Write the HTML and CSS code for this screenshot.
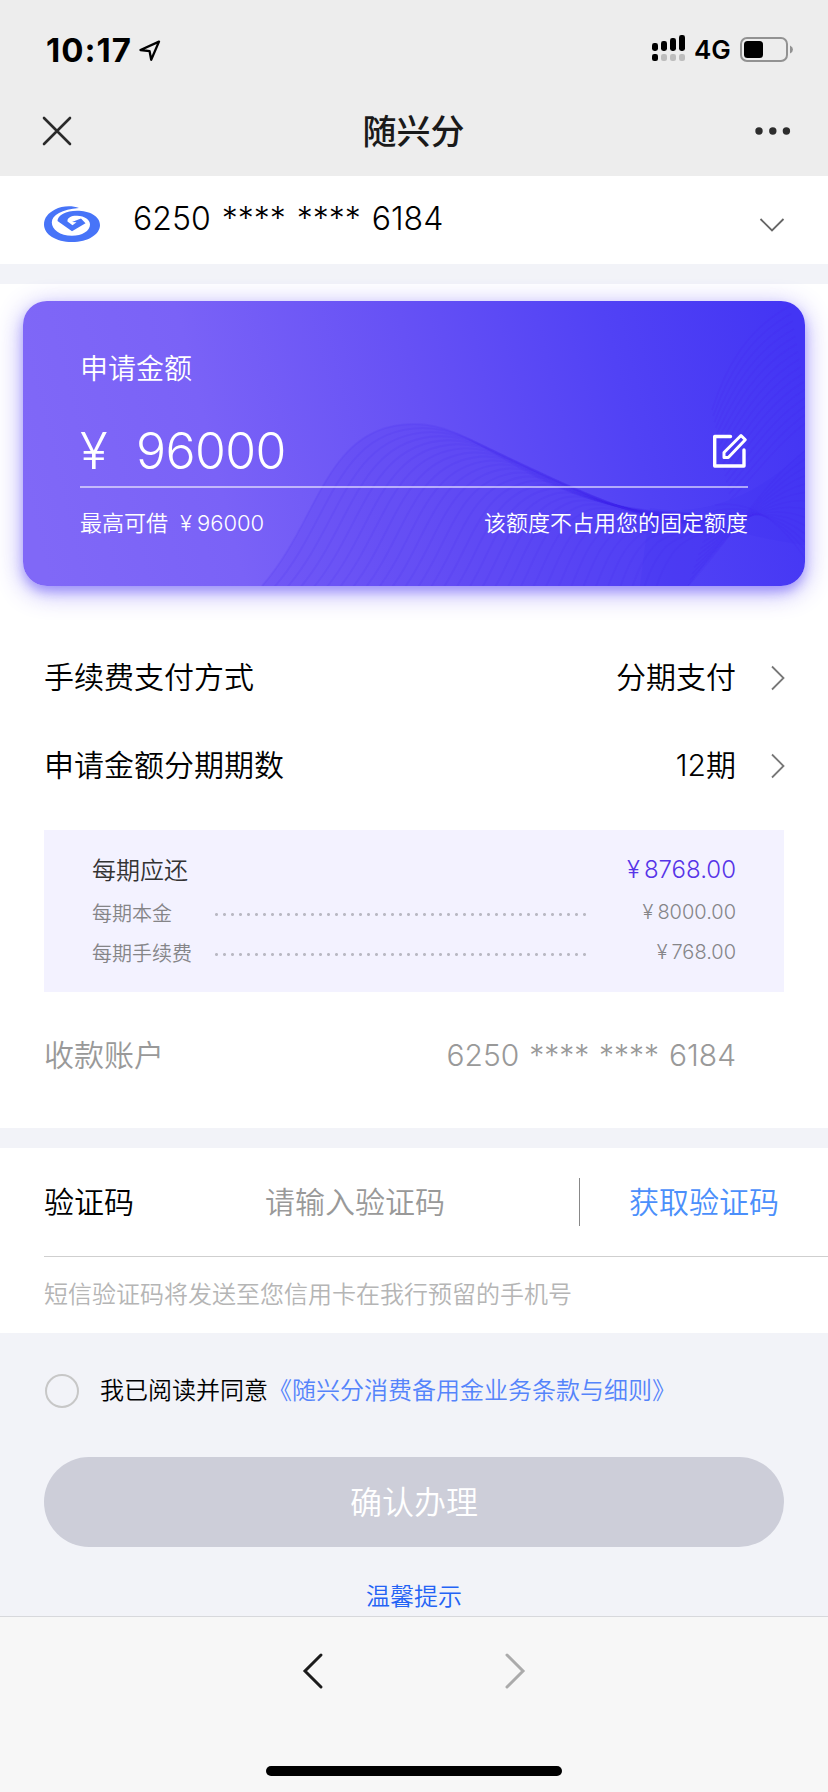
FILE: index.html
```html
<!DOCTYPE html>
<html lang="zh-CN">
<head>
<meta charset="utf-8">
<title>随兴分</title>
<link rel="stylesheet" href="styles.css">
</head>
<body>
<div class="screen">
  <header class="top">
    <div class="status">
      <span class="time">10:17</span>
      <svg class="locate" width="22" height="22" viewBox="0 0 22 22"><path d="M1.5 10 20 1.6 12.2 19.8 10.6 11.2Z" fill="none" stroke="#000" stroke-width="2.3" stroke-linejoin="round"/></svg>
      <svg class="signal" width="34" height="27" viewBox="0 0 34 27">
        <g fill="#000"><rect x="0" y="8" width="6" height="8" rx="2.4"/><rect x="9" y="6" width="6" height="10" rx="2.4"/><rect x="18" y="3" width="6" height="13" rx="2.4"/><rect x="27" y="0" width="6" height="16" rx="2.4"/><rect x="0" y="19" width="6" height="7" rx="2.2"/></g>
        <g fill="#bdbdbd"><rect x="9" y="19" width="6" height="7" rx="2.2"/><rect x="18" y="19" width="6" height="7" rx="2.2"/><rect x="27" y="19" width="6" height="7" rx="2.2"/></g>
      </svg>
      <span class="network">4G</span>
      <svg class="battery" width="54" height="26" viewBox="0 0 54 26"><rect x="1" y="1" width="46" height="23" rx="6" fill="none" stroke="#929292" stroke-width="2"/><rect x="4" y="4" width="19" height="17" rx="3.5"/><path d="M50 8.5q3 1.3 3 4t-3 4z" fill="#929292"/></svg>
    </div>
    <div class="nav">
      <svg class="close" width="30" height="30" viewBox="0 0 30 30"><path d="M2 2 28 28M28 2 2 28" stroke="#2a2a2a" stroke-width="2.6" stroke-linecap="round"/></svg>
      <h1 class="nav-title">随兴分</h1>
      <svg class="more" width="36" height="8" viewBox="0 0 36 8" fill="#2d2d2d"><circle cx="4" cy="4" r="3.7"/><circle cx="17.8" cy="4" r="3.7"/><circle cx="31.4" cy="4" r="3.7"/></svg>
    </div>
  </header>

  <section class="account">
    <svg class="logo" width="56" height="36" viewBox="0 0 56 36">
      <path fill="#4774f8" d="M35 2C28-.6 18-.3 11 3.500 4 7 0 12 0 18.500 0 28.500 12 36 28 36S56 28.500 56 19C56 10 45 4.800 33 4.800 22 4.800 13.500 9.500 13.500 15L28 25.300 41.500 17.300 37 12.600 28 16 32.500 16.200 28.500 19.200 23.500 15.500C23 12 27 9.600 33 9.800 41 10 46 14 46 18.500 46 25 38 29.800 28 29.800 16 29.800 7.800 23.500 7.800 16.500 7.800 9 18 3.500 35 2Z"/>
    </svg>
    <span class="card-no">6250 **** **** 6184</span>
    <svg class="down" width="26" height="14" viewBox="0 0 26 14"><path d="M1.500 1 13 12.500 24.500 1" fill="none" stroke="#666" stroke-width="1.800"/></svg>
  </section>

  <main class="loan">
    <section class="card">
      <svg class="waves" viewBox="23 301 782 285" preserveAspectRatio="none">
        <path fill="#4a28f0" fill-opacity=".14" d="M262 586C320 520 325 424 414 424 490 424 530 512 690 513L730 530 688 586Z"/>
        <path fill="#3a28f4" fill-opacity=".14" d="M650 508C690 515 745 508 805 450V545C770 540 750 535 732 530L688 586H640Z"/>
        <g id="lines" fill="none" stroke="#4322ee"></g>
      </svg>
      <h2 class="card-title">申请金额</h2>
      <div class="amount">
        <span class="yen">¥</span><span class="figure">96000</span>
        <svg class="edit" width="36" height="36" viewBox="0 0 36 36" fill="none" stroke="#fff" stroke-width="3.400" stroke-linejoin="round"><path d="M18.500 3.500H2.700V33H32V17" stroke-linecap="round"/><path stroke-width="3" d="M12 24.500V19.500L29 2.500 33.300 6.800 16.300 24.500Z"/></svg>
      </div>
      <div class="card-foot">
        <span>最高可借<span class="mini-yen">¥</span>96000</span>
        <span>该额度不占用您的固定额度</span>
      </div>
    </section>

    <div class="row"><span>手续费支付方式</span><span class="value">分期支付</span><svg class="next" width="14" height="26" viewBox="0 0 14 26"><path d="M1 1.500 12.500 13 1 24.500" fill="none" stroke="#777" stroke-width="1.800"/></svg></div>
    <div class="row"><span>申请金额分期期数</span><span class="value">12期</span><svg class="next" width="14" height="26" viewBox="0 0 14 26"><path d="M1 1.500 12.500 13 1 24.500" fill="none" stroke="#777" stroke-width="1.800"/></svg></div>

    <section class="plan">
      <div class="plan-total"><span>每期应还</span><span class="total"><span class="y">¥</span>8768.00</span></div>
      <div class="plan-item"><span class="plan-label">每期本金</span><span class="dots"></span><span class="plan-value"><span class="y">¥</span>8000.00</span></div>
      <div class="plan-item last"><span class="plan-label">每期手续费</span><span class="dots"></span><span class="plan-value"><span class="y">¥</span>768.00</span></div>
    </section>

    <div class="row payee"><span>收款账户</span><span class="payee-no">6250 **** **** 6184</span></div>
  </main>

  <section class="verify">
    <div class="code">
      <span class="code-label">验证码</span>
      <span class="placeholder">请输入验证码</span>
      <span class="bar"></span>
      <a class="get-code">获取验证码</a>
    </div>
    <p class="hint">短信验证码将发送至您信用卡在我行预留的手机号</p>
  </section>

  <section class="confirm">
    <div class="agree"><span class="radio"></span><span>我已阅读并同意<a class="terms">《随兴分消费备用金业务条款与细则》</a></span></div>
    <button class="submit">确认办理</button>
    <a class="tips">温馨提示</a>
  </section>

  <footer class="toolbar">
    <div class="arrows">
      <svg width="22" height="38" viewBox="0 0 22 38"><path d="M19 3 3 19 19 35" fill="none" stroke="#1c1c1c" stroke-width="3" stroke-linecap="round"/></svg>
      <svg width="22" height="38" viewBox="0 0 22 38"><path d="M3 3 19 19 3 35" fill="none" stroke="#ababab" stroke-width="3" stroke-linecap="round"/></svg>
    </div>
    <div class="home"></div>
  </footer>
</div>
<script src="waves.js"></script>
</body>
</html>
```

FILE: styles.css
```css
* { box-sizing: border-box; }
body {
  margin: 0;
  background: #f7f7f7;
  color: #000;
  font-family: Inter, "Noto Sans CJK SC", sans-serif;
  font-weight: 350;
}
.screen { width: 828px; height: 1792px; display: flex; flex-direction: column; overflow: hidden; background: #f2f3f8; }
svg { display: block; flex: none; }
h1, h2, p { margin: 0; }

.top { height: 176px; background: #ededed; }
.status { height: 88px; padding: 10px 34px 0 46px; display: flex; align-items: center; }
.time { width: 93px; margin-top: 1px; font-size: 33px; font-weight: 700; line-height: 40px; letter-spacing: 1px; }
.locate { margin-top: 3px; }
.signal { margin: -2px 8px 0 auto; }
.network { width: 46px; margin-top: 1px; font-size: 26px; font-weight: 600; line-height: 32px; }
.battery { margin-top: 1px; }
.nav { height: 88px; padding: 0 37px 2px 42px; display: flex; align-items: center; justify-content: space-between; }
.nav-title { padding-top: 2px; font-size: 34px; font-weight: 500; line-height: 48px; color: #1a1a1a; }

.account { height: 88px; padding: 0 43px 0 44px; display: flex; align-items: center; background: #fff; }
.logo { margin: 8px 33px 0 0; }
.card-no { font-size: 32px; line-height: 40px; margin-top: -2px; word-spacing: 2px; font-weight: 300; }
.down { margin: 9px 0 0 auto; }

.loan { flex: none; height: 844px; margin-top: 20px; padding-top: 17px; background: #fff; display: flow-root; }
.card {
  position: relative;
  height: 285px;
  margin: 0 23px 48px;
  padding: 48px 57px 0;
  border-radius: 24px;
  color: #fff;
  background: linear-gradient(76deg, #8068f7 3%, #7a62f7 26%, #6651f5 52%, #5142f5 76%, #4335f4 98%);
  box-shadow: 0 6px 26px rgba(83, 62, 245, .48), 0 6px 10px rgba(83, 62, 245, .3);
}
.waves { position: absolute; inset: 0; width: 100%; height: 100%; border-radius: 24px; }
.card-title, .amount, .card-foot { position: relative; }
.card-title { font-size: 28px; font-weight: 350; line-height: 40px; }
.amount { height: 99px; padding-top: 27px; border-bottom: 2px solid rgba(255, 255, 255, .55); display: flex; align-items: center; }
.yen { width: 56px; font-size: 51px; line-height: 60px; font-weight: 350; }
.figure { font-size: 50px; line-height: 60px; letter-spacing: -.6px; font-weight: 300; }
.edit { margin: 0 0 0 auto; }
.card-foot { height: 70px; display: flex; align-items: center; justify-content: space-between; font-size: 22px; line-height: 32px; }
.mini-yen { margin: 0 5px 0 12px; }

.row { height: 88px; padding: 0 43px 2px 44px; display: flex; align-items: center; font-size: 30px; line-height: 44px; }
.next { margin-top: 2px; }
.value { margin: 0 35px 0 auto; }
.plan { height: 162px; margin: 20px 44px 19px; padding: 18px 48px 0; background: #f3f2ff; }
.plan-total { height: 40px; display: flex; justify-content: space-between; align-items: center; font-size: 24px; color: #333; }
.total { margin-top: 2px; color: #5634e8; }
.y { margin-right: 4px; }
.plan-item { height: 40px; margin-top: 4px; display: flex; align-items: center; font-size: 20px; color: #858588; }
.plan-item.last { margin-top: 0; }
.plan-label { width: 123px; }
.dots { width: 374px; height: 3px; margin-top: 5px; background: radial-gradient(circle at 1.5px 1.5px, #b9b9c3 1.2px, transparent 1.7px) 0 0 / 8px 3px repeat-x; }
.plan-value { margin-left: auto; }
.payee { padding-bottom: 0; color: #999; }
.payee-no { margin: 0 49px 0 auto; font-weight: 300; word-spacing: 1.4px; }

.verify { flex: none; height: 185px; margin-top: 20px; padding-left: 44px; background: #fff; }
.code { height: 109px; padding-bottom: 1px; display: flex; align-items: center; border-bottom: 1px solid #cfcfcf; font-size: 30px; line-height: 44px; }
.code-label { width: 221px; }
.placeholder { width: 314px; color: #999; }
.bar { width: 1px; height: 48px; background: #888; }
.get-code { margin-left: 49px; color: #4b8ffb; }
.hint { padding-top: 20px; font-size: 24px; line-height: 36px; color: #b5b5b5; }

.confirm { height: 283px; padding: 40px 44px 0; display: flex; flex-direction: column; align-items: center; }
.agree { width: 100%; height: 36px; display: flex; align-items: center; font-size: 24px; line-height: 36px; }
.radio { width: 34px; height: 34px; margin: 0 21px 0 1px; border: 2px solid #c7c7c7; border-radius: 50%; }
.terms { color: #5584fb; }
.submit { width: 740px; height: 90px; margin-top: 48px; padding: 0 0 5px; border: 0; border-radius: 45px; background: #cdced9; color: #fff; font: inherit; font-size: 32px; flex: none; }
.tips { margin-top: 32px; font-size: 24px; line-height: 36px; color: #2463f5; }

.toolbar { height: 176px; flex: none; background: #f7f7f7; border-top: 1px solid #d7d8dc; display: flex; flex-direction: column; align-items: center; }
.arrows { margin-top: 35px; display: flex; gap: 180px; }
.home { width: 296px; height: 10px; margin-top: 76px; border-radius: 5px; background: #000; }
```

FILE: waves.js
```js
// Fine contour lines of the card: each family blends one cubic curve into another.
const group = document.getElementById('lines');

function family(from, to, count, opacity, width) {
  for (let i = 0; i < count; i++) {
    const t = i / (count - 1);
    const p = from.map((v, k) => (v + (to[k] - v) * t).toFixed(1));
    const path = document.createElementNS('http://www.w3.org/2000/svg', 'path');
    let d = `M${p[0]} ${p[1]}C${p.slice(2, 8).join(' ')}`;
    if (p.length > 8) d += `C${p.slice(8).join(' ')}`;
    path.setAttribute('d', d);
    path.setAttribute('stroke-opacity', opacity);
    path.setAttribute('stroke-width', width);
    group.appendChild(path);
  }
}

family([262, 586, 320, 520, 325, 424, 414, 424, 490, 424, 530, 512, 690, 513],
       [650, 610, 655, 590, 660, 570, 675, 550, 685, 540, 700, 530, 730, 530], 32, 0.11, 1.9);
family([688, 586, 730, 540, 765, 480, 806, 450],
       [715, 505, 750, 500, 780, 520, 806, 560], 14, 0.12, 1.3);
family([712, 410, 725, 370, 745, 330, 790, 306],
       [730, 500, 760, 470, 780, 440, 810, 420], 16, 0.13, 1.5);
```
